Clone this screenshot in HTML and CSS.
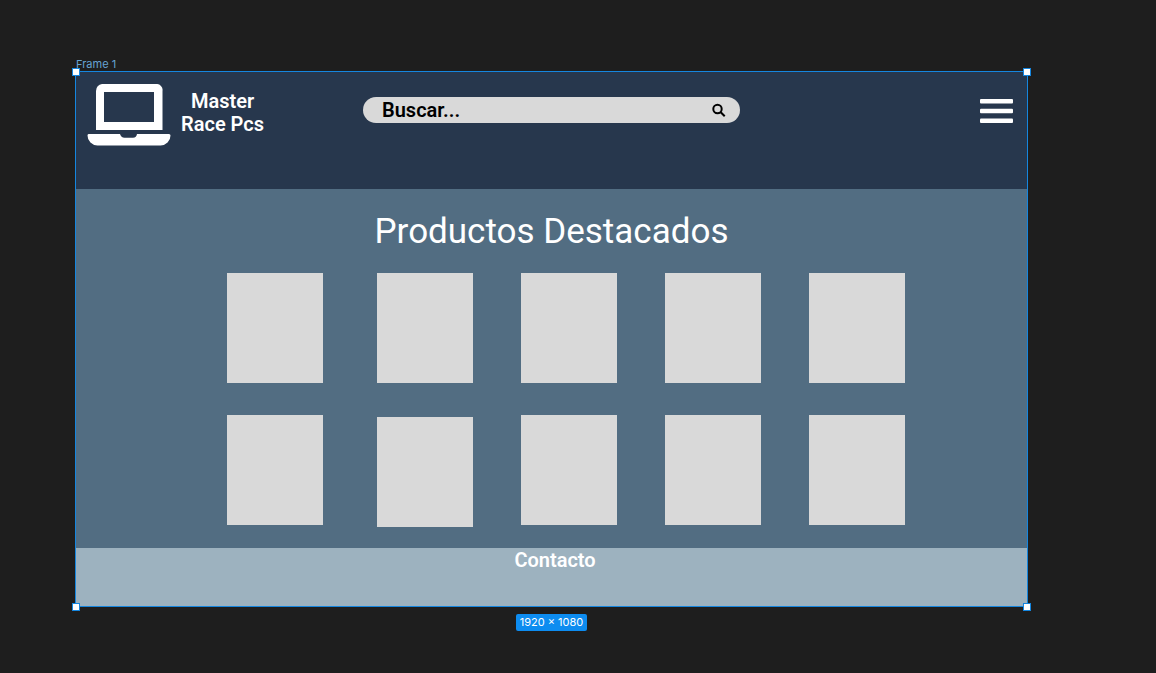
FILE: index.html
```html
<!DOCTYPE html>
<html lang="es">
<head>
<meta charset="utf-8">
<title>Master Race Pcs</title>
<link rel="stylesheet" href="styles.css">
</head>
<body>
<div class="canvas">
  <div class="frame-label">Frame 1</div>
  <div class="frame">
    <header class="header">
      <div class="brand">
        <svg class="brand-icon" viewBox="0 0 84 62" aria-hidden="true">
          <path fill="#fff" fill-rule="evenodd" d="M15 0h54a6 6 0 0 1 6.500 7v39H9V7a7 7 0 0 1 6-7zM17 8v30h50V8z"/>
          <path fill="#fff" d="M1.500 50H33q1 3.700 4.500 3.700h8.500q3.500 0 4-3.700h32q1.500 0 1.500 1.500a10 10 0 0 1-10 10H10.500a10 10 0 0 1-10-10Q.5 50 1.500 50z"/>
        </svg>
        <div class="brand-name">Master<br>Race Pcs</div>
      </div>
      <form class="search">
        <input class="search-input" type="text" placeholder="Buscar..." aria-label="Buscar">
        <button class="search-button" type="button" aria-label="Buscar">
          <svg class="search-icon" viewBox="0 0 14 14" aria-hidden="true"><circle cx="5.500" cy="6" r="4.200"/><path d="M8.700 9.200l4 4"/></svg>
        </button>
      </form>
      <button class="menu" type="button" aria-label="Menú">
        <svg class="menu-icon" viewBox="0 0 33 25" aria-hidden="true"><rect y="0" width="33" height="4.500" rx="1"/><rect y="9.700" width="33" height="4.500" rx="1"/><rect y="19.500" width="33" height="4.500" rx="1"/></svg>
      </button>
    </header>
    <main class="products">
      <h1 class="title">Productos Destacados</h1>
      <div class="grid">
        <div class="card"></div><div class="card"></div><div class="card"></div><div class="card"></div><div class="card"></div>
        <div class="card"></div><div class="card card-low"></div><div class="card"></div><div class="card"></div><div class="card"></div>
      </div>
    </main>
    <footer class="footer">Contacto</footer>
    <span class="handle top left"></span><span class="handle top right"></span>
    <span class="handle bottom left"></span><span class="handle bottom right"></span>
  </div>
  <div class="size">1920 × 1080</div>
</div>
</body>
</html>
```
FILE: styles.css
```css
* { box-sizing: border-box; }
body { margin: 0; background: #1e1e1e; font-family: Roboto, sans-serif; }
.canvas { display: flex; flex-direction: column; padding: 57px 128px 32px 75px; }
.frame-label { padding-left: 1px; font: 11px/14px Inter, sans-serif; color: #66a3d2; }
.frame { position: relative; border: 1px solid #1586df; }
.header {
  display: grid;
  grid-template-columns: 1fr minmax(0, 377px) 1fr;
  align-items: start;
  min-height: 117px;
  padding: 12px 11px 0;
  background: #27374d;
}
.brand { display: flex; gap: 10px; }
.brand-icon { width: 84px; height: 62px; flex: none; }
.brand-name { padding-top: 6px; font-size: 20px; line-height: 23px; font-weight: 600; color: #fff; text-align: center; white-space: nowrap; }
.search { display: flex; align-items: center; height: 26px; margin: 13px 0 0; padding: 0 14px 0 19px; border-radius: 13px; background: #d9d9d9; }
.search-input { flex: 1; min-width: 0; height: 26px; padding: 0; border: 0; outline: 0; background: none; font: 600 20px/26px Roboto, sans-serif; color: #000; }
.search-input::placeholder { color: #000; opacity: 1; }
.search-button, .menu { display: flex; padding: 0; border: 0; background: none; }
.search-icon { width: 14px; height: 14px; fill: none; stroke: #000; stroke-width: 2; }
.menu { justify-self: end; padding: 15px 3px 0 0; }
.menu-icon { width: 33px; height: 25px; fill: #fff; }
.products { padding: 21px 0 23px; background: #526d82; }
.title { margin: 0; font-size: 35px; line-height: 43px; font-weight: 400; color: #fff; text-align: center; }
.grid {
  display: grid;
  grid-template-columns: 102px repeat(4, 96px);
  gap: 32px 48px;
  justify-content: center;
  padding: 20px 0 0 29px;
}
.card { width: 96px; height: 110px; background: #d9d9d9; }
.card-low { margin: 2px 0 -2px; }
.footer { min-height: 58px; padding-left: 7px; background: #9db2bf; font-size: 20px; line-height: 24px; font-weight: 600; color: #fff; text-align: center; }
.handle { position: absolute; width: 8px; height: 8px; border: 1px solid #1586df; background: #fff; }
.top { top: -4px; }
.bottom { bottom: -5px; }
.left { left: -4px; }
.right { right: -4px; }
.size { align-self: center; margin-top: 7px; padding: 0 4px; border-radius: 2px; background: #0d8cf0; font: 11px/17px Inter, sans-serif; color: #fff; }
```
